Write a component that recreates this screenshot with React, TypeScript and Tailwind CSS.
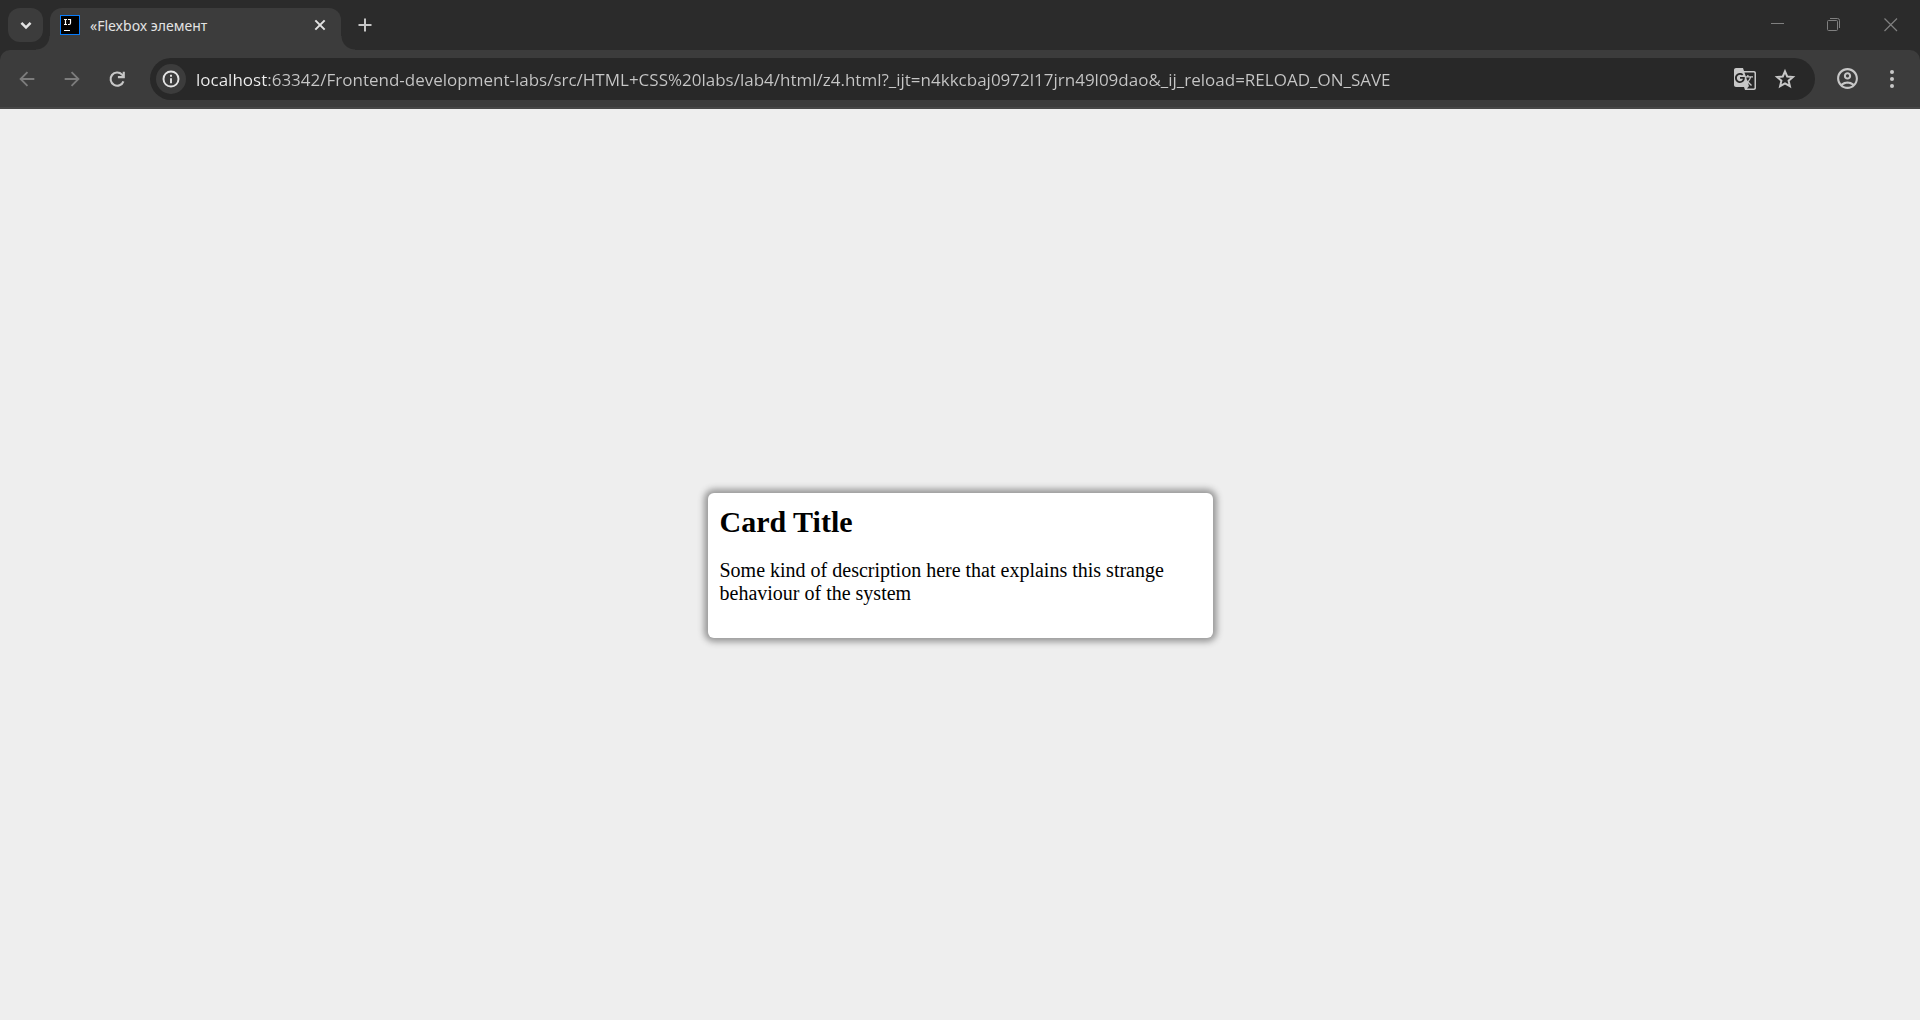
import React from "react";
import { MdGTranslate, MdOutlineAccountCircle } from "react-icons/md";

const url =
  "localhost:63342/Frontend-development-labs/src/HTML+CSS%20labs/lab4/html/z4.html?_ijt=n4kkcbaj0972l17jrn49l09dao&_ij_reload=RELOAD_ON_SAVE";

type IconProps = { children: React.ReactNode; className?: string };

function Icon({ children, className = "size-6" }: IconProps) {
  return (
    <svg viewBox="0 0 24 24" fill="none" stroke="currentColor" strokeWidth="2" className={className} aria-hidden="true">
      {children}
    </svg>
  );
}

function IdeaLogo() {
  return (
    <svg viewBox="0 0 20 20" className="size-5 shrink-0" aria-hidden="true">
      <rect width="20" height="20" fill="#087cfa" />
      <rect x="1" y="1" width="18" height="18" fill="#000" />
      <path
        d="M4 4.500h3M5.500 4.500v5M4 9.500h3M8 4.500h2.500v3.500c0 1-.6 1.500-1.300 1.500H8M4 15.500h6"
        fill="none"
        stroke="#fff"
        strokeWidth="1.200"
      />
    </svg>
  );
}

function TabStrip() {
  return (
    <div className="flex h-[50px] items-center bg-[#2b2b2b]">
      <button
        aria-label="Search tabs"
        className="ml-2 flex h-[34px] w-[35px] items-center justify-center rounded-xl bg-[#3c3c3c] text-[#e3e3e3]"
      >
        <Icon className="size-5">
          <path d="M6.500 9.500l5.500 5.500 5.500-5.500" strokeWidth="3" />
        </Icon>
      </button>
      <div className="relative ml-[7px] flex h-[42px] w-[291px] items-center self-end rounded-t-xl bg-[#3c3c3c] pb-[8px] pl-[10px] pr-[11px] text-[#e3e3e3]">
        <span className="absolute bottom-0 right-full size-[14px] bg-[radial-gradient(circle_at_0_0,transparent_13px,#3c3c3c_14px)]" />
        <span className="absolute bottom-0 left-full size-[14px] bg-[radial-gradient(circle_at_100%_0,transparent_13px,#3c3c3c_14px)]" />
        <IdeaLogo />
        <span className="ml-[10px] flex-1 whitespace-nowrap text-[14px]">«Flexbox элемент</span>
        <button aria-label="Close tab" className="flex size-5 items-center justify-center">
          <Icon className="size-4">
            <path d="M5 5l14 14M19 5L5 19" strokeWidth="3" />
          </Icon>
        </button>
      </div>
      <button aria-label="New tab" className="ml-3 flex size-6 items-center justify-center text-[#c7c7c7]">
        <Icon className="size-6">
          <path d="M12 5.500v13M5.500 12h13" />
        </Icon>
      </button>
      <div className="ml-auto flex h-full text-[#808080]">
        <button aria-label="Minimize" className="flex w-14 items-center justify-center">
          <svg viewBox="0 0 14 14" className="size-[14px]" fill="none" stroke="currentColor">
            <path d="M0 5.500h13" />
          </svg>
        </button>
        <button aria-label="Restore" className="flex w-14 items-center justify-center">
          <svg viewBox="0 0 14 14" className="size-[14px]" fill="none" stroke="currentColor">
            <rect x="0.500" y="2.500" width="10" height="10" rx="1" />
            <path d="M3 .5h7.500a2 2 0 0 1 2 2V10" />
          </svg>
        </button>
        <button aria-label="Close" className="flex w-[58px] items-center justify-center">
          <svg viewBox="0 0 14 14" className="size-[14px]" fill="none" stroke="currentColor" strokeWidth="1.200">
            <path d="M.5.5l12.500 12.500M13 .5L.5 13" />
          </svg>
        </button>
      </div>
    </div>
  );
}

function Toolbar() {
  return (
    <div className="bg-[#2b2b2b]">
      <div className="flex h-[59px] items-center rounded-t-[10px] border-b-2 border-[#474747] bg-[#3c3c3c] pr-[10px] text-[#c7c7c7]">
        <div className="flex gap-[9px] pl-[9px]">
          <button aria-label="Back" className="flex size-9 items-center justify-center text-[#7c7c7c]">
            <Icon className="size-[22px]">
              <path d="M20 12H5M12.500 4.500L5 12l7.500 7.500" />
            </Icon>
          </button>
          <button aria-label="Forward" className="flex size-9 items-center justify-center text-[#7c7c7c]">
            <Icon className="size-[22px]">
              <path d="M4 12h15M11.500 4.500L19 12l-7.500 7.500" />
            </Icon>
          </button>
          <button aria-label="Reload" className="flex size-9 items-center justify-center">
            <Icon className="size-[22px]">
              <path d="M19 14.500A7.200 7.200 0 1 1 17.500 7.200L19 8.800M19.400 4v6H13" strokeWidth="2.300" />
            </Icon>
          </button>
        </div>
        <div className="ml-[15px] flex h-[42px] flex-1 items-center rounded-full bg-[#282828] pl-[6px] pr-[18px]">
          <button
            aria-label="View site information"
            className="flex size-[30px] items-center justify-center rounded-full bg-[#3c3c3c] text-[#e3e3e3]"
          >
            <Icon className="size-5">
              <circle cx="12" cy="12" r="9" strokeWidth="2.300" />
              <path d="M12 11v6M12 7v2.300" strokeWidth="2.300" />
            </Icon>
          </button>
          <input
            aria-label="Address"
            type="text"
            defaultValue={url}
            spellCheck={false}
            className="ml-[10px] min-w-0 flex-1 bg-[linear-gradient(90deg,#f0f0f0_72px,#c7c7c7_72px)] bg-clip-text pt-0.5 font-['Open_Sans',sans-serif] text-[17px] text-transparent outline-none"
          />
          <div className="flex items-center gap-4">
            <button aria-label="Translate this page">
              <MdGTranslate className="size-6" />
            </button>
            <button aria-label="Bookmark this tab">
              <Icon>
                <path
                  d="M12 4.300l2.200 5.200 5.700.5-4.300 3.700 1.300 5.500L12 16.300l-4.900 2.900 1.300-5.500L4.100 10l5.700-.5z"
                />
              </Icon>
            </button>
          </div>
        </div>
        <div className="flex items-center gap-[9px] pl-[14px]">
          <button aria-label="Profile" className="flex size-9 items-center justify-center">
            <MdOutlineAccountCircle className="size-[25px]" />
          </button>
          <button aria-label="Menu" className="flex size-9 items-center justify-center">
            <svg viewBox="0 0 24 24" className="size-6" fill="currentColor">
              <circle cx="12" cy="5" r="2" />
              <circle cx="12" cy="12" r="2" />
              <circle cx="12" cy="19" r="2" />
            </svg>
          </button>
        </div>
      </div>
    </div>
  );
}

export default function App() {
  return (
    <div className="flex min-h-screen flex-col bg-[#eeeeee]">
      <header className="font-['Noto_Sans',sans-serif]">
        <TabStrip />
        <Toolbar />
      </header>
      <main className="flex flex-1 items-center justify-center pt-px font-['Liberation_Serif',serif] text-black">
        <article className="w-[505px] rounded-[6px] bg-white px-3 pb-[13px] pt-3 shadow-[0_0_6px_4px_#999999]">
          <h2 className="text-[30px] font-bold leading-[34px]">Card Title</h2>
          <p className="my-5 text-[20px] leading-[23px]">
            Some kind of description here that explains this strange behaviour of the system
          </p>
        </article>
      </main>
    </div>
  );
}
